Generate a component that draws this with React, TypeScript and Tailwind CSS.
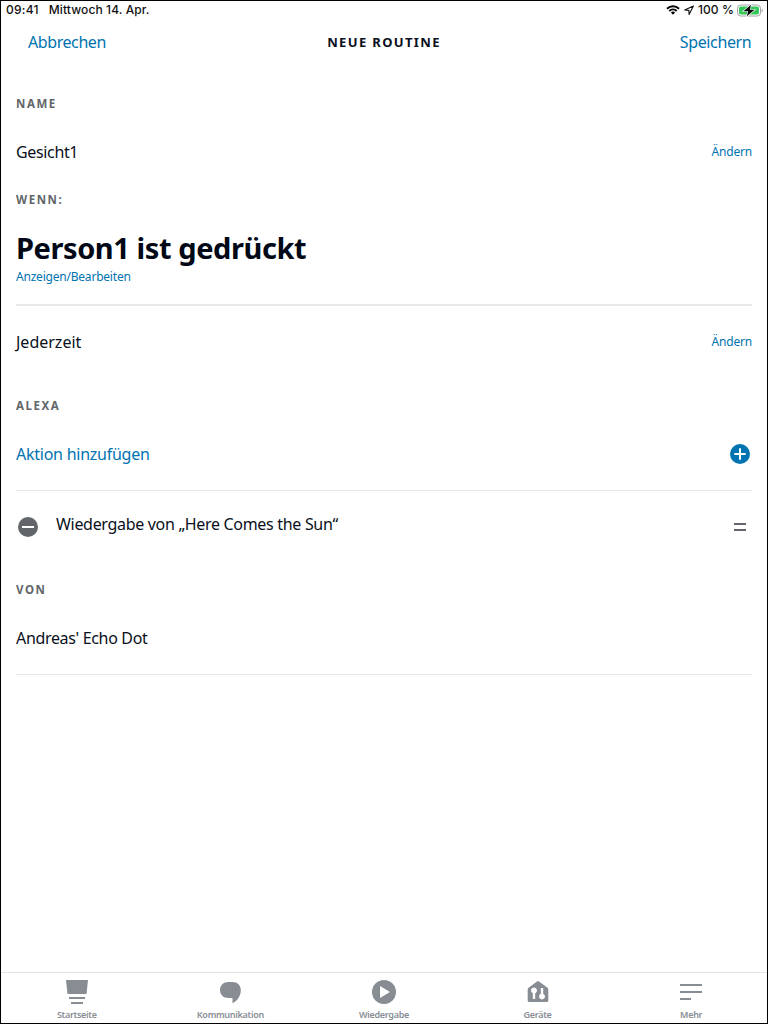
import React from "react";

function StatusBar() {
  return (
    <div className="flex h-[18px] shrink-0 items-center justify-between pl-[5px] pr-[4px] font-['Inter',sans-serif] text-[12px] leading-[18px] font-medium text-[#111]">
      <div className="flex gap-[10px] whitespace-nowrap">
        <span className="tracking-[0.25px]">09:41</span>
        <span className="tracking-[0.11px]">Mittwoch 14. Apr.</span>
      </div>
      <div className="flex items-center whitespace-nowrap">
        <svg className="mr-[4px] h-[10px] w-[14px]" viewBox="0 0 14 10" fill="none" stroke="#000">
          <path d="M1 3.7a8.6 8.6 0 0 1 12 0" strokeWidth="1.9" />
          <path d="M3.3 6a5.3 5.3 0 0 1 7.4 0" strokeWidth="1.8" />
          <path d="M7 9.7 4.9 7.6a3 3 0 0 1 4.2 0z" fill="#000" stroke="none" />
        </svg>
        <svg className="mr-[4px] h-[10px] w-[10px]" viewBox="0 0 10 10" fill="none" stroke="#111" strokeWidth="1.1" strokeLinejoin="round">
          <path d="M9.400.9.700 5l4.200.4.200 4z" />
        </svg>
        <span className="mr-[3px] tracking-[0.1px]">100 %</span>
        <svg className="-mr-px h-[13px] w-[27px]" viewBox="0 0 27 13">
          <rect x=".5" y="1" width="23" height="11" rx="3.2" fill="#fff" stroke="#a3a3a3" />
          <rect x="2" y="2.5" width="20" height="8" rx="1.8" fill="#34c759" />
          <path d="M24.700 4.700v3.800c1.600-.6 1.600-3.200 0-3.800z" fill="#a3a3a3" />
          <path d="M14 .8 6.500 7.200h4.700L9.800 12.300 17.500 5.800h-4.600z" fill="#000" stroke="#fff" strokeWidth="1.2" paintOrder="stroke" />
        </svg>
      </div>
    </div>
  );
}

function Label({ children, className }: { children: React.ReactNode; className: string }) {
  return (
    <h2 className={`h-6 shrink-0 text-[11.5px] leading-6 font-bold tracking-[1.55px] text-[#62666a] ${className}`}>{children}</h2>
  );
}

function SettingRow({ children, className }: { children: React.ReactNode; className: string }) {
  return (
    <div className={`flex h-12 shrink-0 items-center justify-between text-[16px] ${className}`}>
      {children}
      <button className="text-[12px] tracking-[-0.2px] text-[#0073b1]">Ändern</button>
    </div>
  );
}

function Tab({ label, children }: { label: string; children: React.ReactNode }) {
  return (
    <button className="flex flex-1 flex-col items-center">
      <svg className="mt-[4px] h-[30px] w-[30px]" viewBox="0 0 30 30" fill="#888d94">
        {children}
      </svg>
      <span className="mt-[2px] text-[9px] leading-[12px] font-semibold tracking-[-0.28px] text-[#888d94]">{label}</span>
    </button>
  );
}

export default function App() {
  return (
    <div className="flex h-[1024px] w-[768px] flex-col overflow-hidden border border-black bg-white font-['Noto_Sans',sans-serif] text-[#0a1020]">
      <StatusBar />
      <header className="grid h-[46px] shrink-0 grid-cols-3 items-center pr-[15px] pl-[27px] text-[16px] text-[#0073b1]">
        <button className="justify-self-start tracking-[-0.42px]">Abbrechen</button>
        <h1 className="mt-px ml-[-12px] justify-self-center text-[13px] font-bold tracking-[1.35px] whitespace-nowrap text-[#0a1020]">NEUE ROUTINE</h1>
        <button className="mr-[0.6px] justify-self-end tracking-[-0.36px]">Speichern</button>
      </header>
      <main className="flex flex-1 flex-col px-[15px]">
        <Label className="mt-[27px]">NAME</Label>
        <SettingRow className="mt-3">
          <span className="tracking-[-0.35px]">Gesicht1</span>
        </SettingRow>
        <Label className="mt-3">WENN:</Label>
        <p className="mt-4 h-10 text-[29px] leading-10 font-bold tracking-[-0.42px] text-[#020816]">Person1 ist gedrückt</p>
        <button className="h-[18px] self-start text-[12px] leading-[18px] tracking-[-0.21px] text-[#0073b1]">Anzeigen/Bearbeiten</button>
        <div className="mt-[18px] h-[2px] bg-[#e7e8e9]" />
        <SettingRow className="mt-3">
          <span>Jederzeit</span>
        </SettingRow>
        <Label className="mt-7">ALEXA</Label>
        <div className="mt-3 flex h-12 items-center justify-between text-[16px] text-[#0073b1]">
          <span className="tracking-[-0.25px]">Aktion hinzufügen</span>
          <svg className="mr-[2px] h-5 w-5" viewBox="0 0 20 20">
            <circle cx="10" cy="10" r="10" fill="#0073b1" />
            <path d="M10 4.300v11.400M4.300 10h11.400" stroke="#fff" strokeWidth="2" />
          </svg>
        </div>
        <div className="mt-3 h-px bg-[#e7e8e9]" />
        <div className="mt-[24px] flex h-[24px] items-center pl-[2px] text-[16px]">
          <svg className="h-5 w-5" viewBox="0 0 20 20">
            <circle cx="10" cy="10" r="10" fill="#62666a" />
            <path d="M4 10h12" stroke="#fff" strokeWidth="2" />
          </svg>
          <span className="mb-[6px] ml-[18px] tracking-[-0.31px]">Wiedergabe von „Here Comes the Sun“</span>
          <svg className="mr-[6px] ml-auto h-[8px] w-[12px]" viewBox="0 0 12 8">
            <path d="M0 1h12M0 7h12" stroke="#62666a" strokeWidth="2" />
          </svg>
        </div>
        <Label className="mt-[39px]">VON</Label>
        <p className="mt-6 h-6 text-[16px] leading-6 tracking-[-0.33px]">Andreas' Echo Dot</p>
        <div className="mt-6 h-px bg-[#e7e8e9]" />
      </main>
      <nav className="-mx-px flex h-[51px] shrink-0 border-t border-[#e2e3e4]">
        <Tab label="Startseite">
          <path d="M4 3h22l-1.500 14h-19zM7 20h16v2H7zM9 25h12v2H9z" />
        </Tab>
        <Tab label="Kommunikation">
          <path d="M13.500 5h4C22.500 5 25.800 8.300 25.800 13c0 6-3.400 11-8.300 13.200V21h-4C8.300 21 5 17.500 5 13s3.300-8 8.500-8z" />
        </Tab>
        <Tab label="Wiedergabe">
          <circle cx="15" cy="15" r="12" />
          <path d="M11 9v12l10-6z" fill="#fff" />
        </Tab>
        <Tab label="Geräte">
          <path d="M14 4.400q1-.8 2 0l8.500 6.300q.8.6.8 1.500V23.500q0 1.500-1.500 1.500H6.200q-1.500 0-1.500-1.500V12.200q0-.9.8-1.500z" />
          <g fill="#fff" stroke="#fff">
            <circle cx="11" cy="13.500" r="2.500" />
            <path d="M11 13.500V22" strokeWidth="2.400" />
            <circle cx="19" cy="19.500" r="2.500" />
            <path d="M19 11v8.500" strokeWidth="2.400" />
          </g>
        </Tab>
        <Tab label="Mehr">
          <path d="M4 7h22v2H4zM4 14h22v2H4zM4 21h11v2H4z" />
        </Tab>
      </nav>
    </div>
  );
}
